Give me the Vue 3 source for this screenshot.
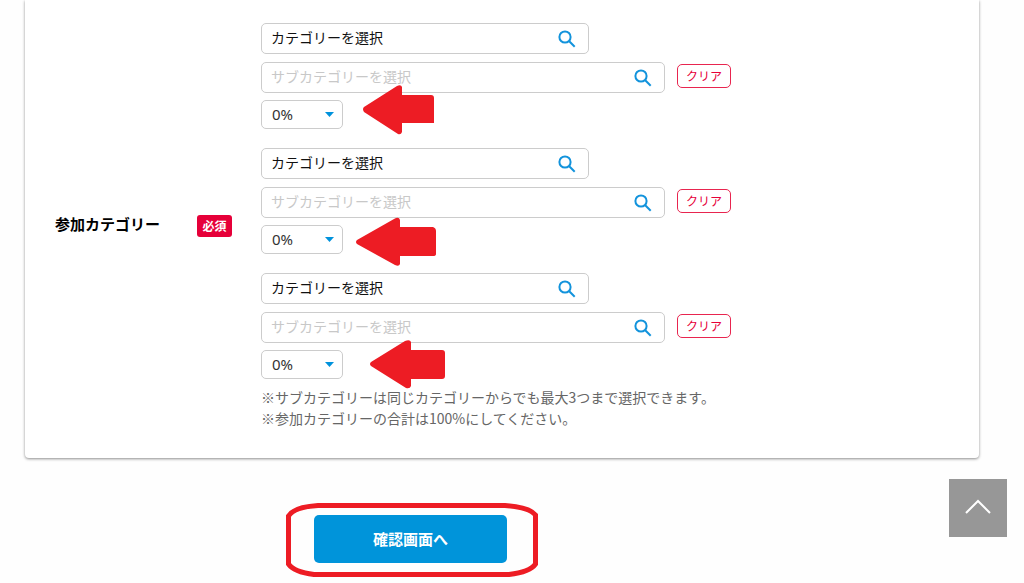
<script setup>
import { ref } from 'vue'

const percentages = Array.from({ length: 11 }, (_, i) => `${i * 10}%`)

const groups = ref([
  {
    id: 1,
    category: '',
    sub: '',
    share: '0%',
    view: '356 83 92 60',
    arrow: 'M364 107 L397 86 Q401 84 402 87 V95 H431 Q434 95 434 98 V123 H402 V132 Q401 135 398 134 L364 112 Q362 109 364 107 Z'
  },
  {
    id: 2,
    category: '',
    sub: '',
    share: '0%',
    view: '356 208 92 60',
    arrow: 'M357 240 L394 219 Q399 216 400 220 V227 H433 Q436 228 436 231 V254 Q436 256 433 256 H400 V264 Q399 267 395 265 L357 244 Q355 242 357 240 Z'
  },
  {
    id: 3,
    category: '',
    sub: '',
    share: '0%',
    view: '356 333 92 60',
    arrow: 'M371 362 L405 341 Q410 339 411 342 V350 H442 Q445 350 445 353 V376 Q445 379 442 379 H411 V386 Q410 389 406 388 L371 366 Q369 364 371 362 Z'
  }
])

function clearGroup(group) {
  group.category = ''
  group.sub = ''
}

function scrollTop() {
  window.scrollTo({ top: 0, behavior: 'smooth' })
}
</script>

<template>
  <form class="page" @submit.prevent>
    <section class="card">
      <div class="heading">
        <h2 id="category-title">参加カテゴリー</h2>
        <span class="required">必須</span>
      </div>
      <div class="body" role="group" aria-labelledby="category-title">
        <div v-for="g in groups" :key="g.id" class="group">
          <div class="row">
            <div class="field category">
              <input v-model="g.category" type="text" placeholder="カテゴリーを選択" aria-label="カテゴリーを選択" />
              <button type="button" class="search" aria-label="カテゴリーを検索">
                <svg viewBox="0 0 20 20" aria-hidden="true"><circle cx="8" cy="8" r="5.6" /><path d="M12 12 L17.7 17.7" /></svg>
              </button>
            </div>
          </div>
          <div class="row">
            <div class="field sub">
              <input v-model="g.sub" type="text" placeholder="サブカテゴリーを選択" aria-label="サブカテゴリーを選択" />
              <button type="button" class="search" aria-label="サブカテゴリーを検索">
                <svg viewBox="0 0 20 20" aria-hidden="true"><circle cx="8" cy="8" r="5.6" /><path d="M12 12 L17.7 17.7" /></svg>
              </button>
            </div>
            <button type="button" class="clear" @click="clearGroup(g)">クリア</button>
          </div>
          <div class="share">
            <select v-model="g.share" aria-label="割合">
              <option v-for="p in percentages" :key="p">{{ p }}</option>
            </select>
            <svg class="caret" viewBox="0 0 9 5" aria-hidden="true"><path d="M0 0 H9 L4.5 5 Z" /></svg>
          </div>
          <svg class="pointer" :viewBox="g.view" aria-hidden="true"><path :d="g.arrow" /></svg>
        </div>
        <p class="note">※サブカテゴリーは同じカテゴリーからでも最大3つまで選択できます。</p>
        <p class="note">※参加カテゴリーの合計は100%にしてください。</p>
      </div>
    </section>

    <div class="actions">
      <div class="submit-wrap">
        <button type="submit" class="submit">確認画面へ</button>
        <svg class="ring" viewBox="284 501 256 78" aria-hidden="true">
          <path d="M318 505.5 H505 Q529 507 535.5 515 V564 Q530 572 509 574.5 H314 Q294 572 288.5 564 V516 Q294 507 318 505.5 Z" />
        </svg>
      </div>
    </div>

    <button type="button" class="to-top" aria-label="ページの先頭へ" @click="scrollTop">
      <svg viewBox="0 0 26 16" aria-hidden="true"><path d="M1 14 L13 2 L25 14" /></svg>
    </button>
  </form>
</template>

<style>
body {
  margin: 0;
  background: #fefefe;
}
</style>

<style scoped>
.page,
.page button,
.page input {
  font-family: "Noto Sans CJK JP", "Noto Sans", sans-serif;
}

.page *,
.page {
  box-sizing: border-box;
}

.card {
  display: grid;
  grid-template-columns: 206px minmax(0, 1fr);
  align-items: center;
  margin: 0 45px 0 25px;
  padding: 23px 30px 29px;
  background: #fff;
  border-radius: 0 0 4px 4px;
  box-shadow: 0 1px 3px rgba(0, 0, 0, 0.45);
}

.heading {
  display: flex;
  align-items: center;
  justify-content: space-between;
  padding-right: 29px;
}

.heading h2 {
  margin: 0;
  padding-bottom: 4px;
  font-size: 15px;
  line-height: 22px;
  font-weight: 700;
  color: #000;
}

.required {
  width: 35px;
  border-radius: 3px;
  background: #e60039;
  color: #fff;
  font-size: 12px;
  line-height: 22px;
  font-weight: 700;
  text-align: center;
}

.group {
  position: relative;
  margin-bottom: 19px;
}

.group:nth-child(3) {
  margin-bottom: 8px;
}

.row {
  display: flex;
  align-items: center;
  gap: 12px;
  margin-bottom: 8px;
}

.field {
  display: flex;
  align-items: center;
  height: 31px;
  padding: 0 11px 0 9px;
  border: 1px solid #ccc;
  border-radius: 5px;
  background: #fff;
}

.category {
  width: 328px;
}

.sub {
  width: 404px;
}

.field input {
  flex: 1;
  min-width: 0;
  padding: 0 0 4px;
  border: 0;
  outline: 0;
  background: transparent;
  font-size: 14px;
  line-height: 20px;
  color: #111;
}

.field input::placeholder {
  color: #111;
  opacity: 1;
}

.sub input::placeholder {
  color: #c8c8c8;
}

.search {
  display: flex;
  padding: 0;
  border: 0;
  background: none;
}

.search svg {
  width: 20px;
  height: 20px;
  fill: none;
  stroke: #1293dc;
  stroke-width: 2;
}

.clear {
  width: 54px;
  height: 24px;
  margin-bottom: 3px;
  padding: 0 0 1px;
  border: 1px solid #e8254f;
  border-radius: 5px;
  background: #fff;
  color: #e60039;
  font-size: 12px;
  line-height: 20px;
}

.share {
  position: relative;
  width: 82px;
  margin-top: -1px;
}

.share select {
  display: block;
  width: 100%;
  height: 29px;
  padding: 0 10px 2px;
  border: 1px solid #ccc;
  border-radius: 5px;
  appearance: none;
  background: #fff;
  color: #333;
  font-family: "Noto Sans", sans-serif;
  font-size: 15px;
}

.caret {
  position: absolute;
  top: 12px;
  right: 9px;
  width: 9px;
  height: 5px;
  fill: #0092dc;
  pointer-events: none;
}

.pointer {
  position: absolute;
  top: 60px;
  left: 95px;
  width: 92px;
  height: 60px;
  fill: #ed1c24;
  pointer-events: none;
}

.note {
  margin: 0;
  font-size: 14px;
  line-height: 21px;
  color: #666;
}

.actions {
  padding: 57px 0 14px 314px;
}

.submit-wrap {
  position: relative;
  width: 193px;
}

.submit {
  display: block;
  width: 100%;
  height: 48px;
  padding: 0 0 2px;
  border: 0;
  border-radius: 5px;
  background: #0094da;
  color: #fff;
  font-size: 15px;
  font-weight: 700;
}

.ring {
  position: absolute;
  top: -14px;
  left: -30px;
  width: 256px;
  height: 78px;
  fill: none;
  stroke: #ed1c24;
  stroke-width: 5;
  pointer-events: none;
}

.to-top {
  position: fixed;
  right: 17px;
  bottom: 46px;
  display: flex;
  align-items: center;
  justify-content: center;
  width: 58px;
  height: 58px;
  padding: 0 0 2px;
  border: 0;
  background: #979797;
}

.to-top svg {
  width: 26px;
  height: 16px;
  fill: none;
  stroke: #fff;
  stroke-width: 2;
}
</style>
